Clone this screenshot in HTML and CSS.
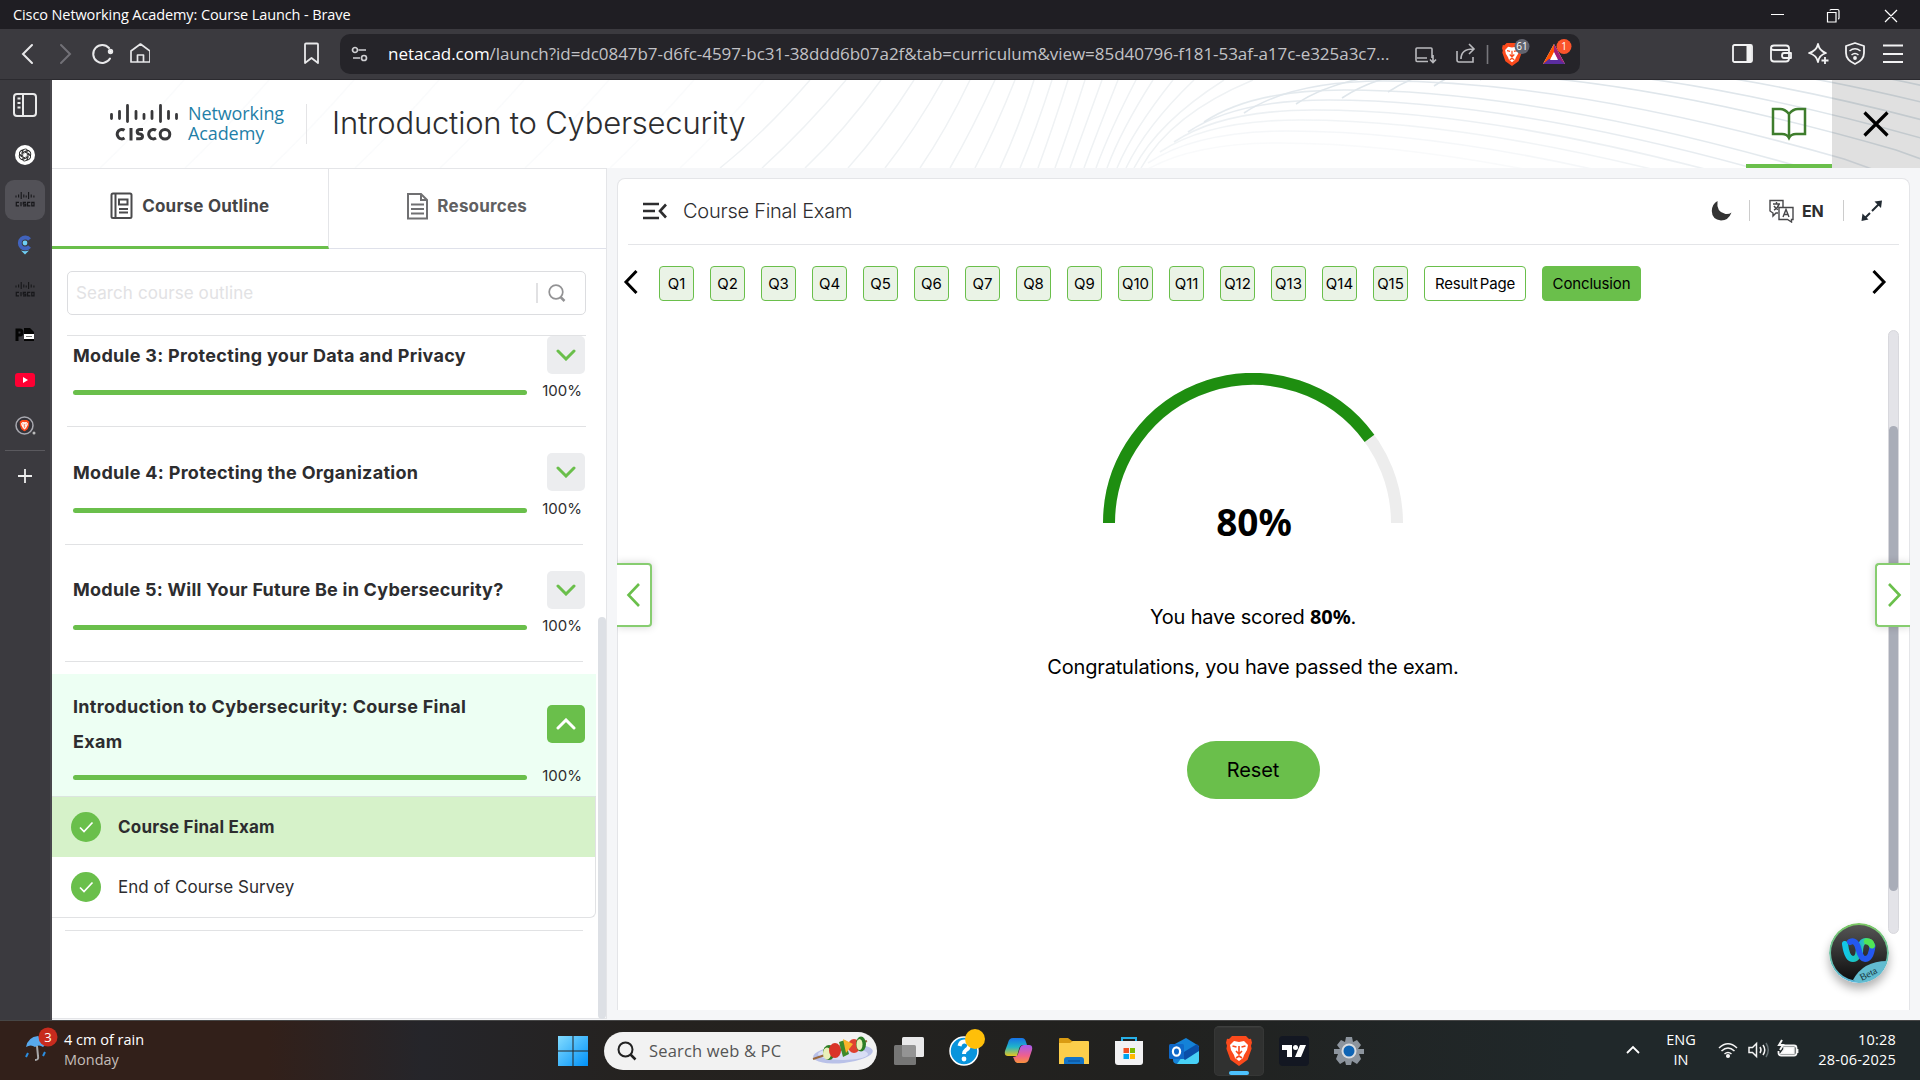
FILE: index.html
```html
<!DOCTYPE html>
<html lang="en">
<head>
<meta charset="utf-8">
<title>Cisco Networking Academy: Course Launch</title>
<link rel="stylesheet" href="styles.css">
</head>
<body>
<svg class="defs" width="0" height="0">
  <defs>
    <symbol id="cisco" viewBox="0 0 20 16">
      <path d="M1 3.5v2M3.6 2.5v3M6.2 0v7M8.8 2.5v3M11.2 3.5v2M13.6 0v7M16.2 2.5v3M18.9 3.5v2" stroke="#17171a" stroke-width="1.1" fill="none"/>
      <path d="M4 10.4H1.300v3.400H4M6 10v4.200M11 10.400H8.300v1.800h2.500v1.700H8M15.300 10.400h-2.700v3.400h2.700M16.800 10.400h2.200v3.400h-2.200z" stroke="#17171a" stroke-width="1.2" fill="none"/>
    </symbol>
    <symbol id="lion" viewBox="0 0 26 30">
      <path d="M6 0h14l3 3 2-.3 1 4-1 3 .6 3-4 11L13 30 4.400 23.700.4 12.700 1 9.700 0 6.700l1-4 2 .3z" fill="#fb4a1c"/>
      <path d="M8 5l5 1 5-1 4 4-1 5-3 5-1 3-4 3-4-3-1-3-3-5-1-5z" fill="#fff"/>
      <path d="M6.500 10l4 1M19.500 10l-4 1M13 10v7M10 15l3 3 3-3M10 22l3-2 3 2" stroke="#fb4a1c" stroke-width="1.600" fill="none"/>
    </symbol>
    <symbol id="down" viewBox="0 0 20 12"><path d="M2 2l8 8 8-8" fill="none" stroke="#6abf4b" stroke-width="3" stroke-linecap="round"/></symbol>
    <symbol id="check" viewBox="0 0 30 30"><circle cx="15" cy="15" r="15" fill="#6abf4b"/><path d="M9 15.500l4 4L21.500 10.500" fill="none" stroke="#fff" stroke-width="1.700"/></symbol>
  </defs>
</svg>

<div class="titlebar">
  <span class="window-title">Cisco Networking Academy: Course Launch - Brave</span>
  <svg class="window-buttons" width="130" height="28" viewBox="0 0 130 28"><g fill="none" stroke="#fff" stroke-width="1.200"><path d="M1 13.500h13M57.500 11.500h8.500v9.500h-8.500zM60 9.500q0-1 1-1h6.500q1.500 0 1.500 1.500v7q0 1-1 1M115 9l12 12M127 9l-12 12"/></g></svg>
</div>

<div class="toolbar">
  <svg class="nav-icons" width="150" height="50" viewBox="0 0 150 50"><g fill="none" stroke="#e8e8ea" stroke-width="2" stroke-linecap="round"><path d="M32 16l-9 9 9 9"/><path d="M61 16l9 9-9 9" stroke="#727177"/><path d="M110 29.500a9 9 0 1 1-1-10.500"/><circle cx="110.500" cy="22.500" r="1.700" fill="#fff"/><path d="M131 22l9.500-7 9.500 7v11h-19zM137.500 33v-7h6v7" stroke-linejoin="round" stroke-width="1.700"/></g></svg>
  <svg class="bookmark" width="18" height="24" viewBox="0 0 18 24"><path d="M2 2.500q0-1 1-1h11q1 0 1 1V21l-6.500-5L2 21z" fill="none" stroke="#e8e8ea" stroke-width="1.800" stroke-linejoin="round"/></svg>
  <div class="address">
    <svg width="18" height="16" viewBox="0 0 18 16"><g fill="none" stroke="#d0d0d3" stroke-width="1.700"><circle cx="4" cy="4" r="2.500"/><path d="M7.500 4H15M2 12h7"/><circle cx="13" cy="12" r="2.500"/></g></svg>
    <span class="url"><b>netacad.com</b>/launch?id=dc0847b7-d6fc-4597-bc31-38ddd6b07a2f&amp;tab=curriculum&amp;view=85d40796-f181-53af-a17c-e325a3c7...</span>
    <svg class="address-icons" width="170" height="40" viewBox="0 0 170 40"><g fill="none" stroke="#b9b9bd" stroke-width="1.600"><path d="M19 24V15q0-1-1-1H4q-1 0-1 1v11q0 1.500 1 1.500h11M4 24h10M20 21v7M17 25.500l3 3 3-3"/><path d="M44 17v9q0 2 2 2h14v-5M48 25q0-10 12-10M56 10l5 5-5 5"/><path d="M74.500 11v19" stroke="#77777c"/></g>
      <use href="#lion" x="89" y="9" width="20" height="23"/><path d="M141 10l11 20h-22z" fill="#fff"/><path d="M141 10v9l-6 11h-5z" fill="#ff5200"/><path d="M141 10v9l6 11h5z" fill="#a11f77"/><path d="M130 30l6-5h10l6 5z" fill="#5b2d9f"/><path d="M141 18l4 8h-8z" fill="#fff"/><circle cx="109" cy="12.500" r="7.500" fill="#62646f"/><circle cx="151" cy="12.500" r="7.500" fill="#fb542b"/><text x="109" y="16" class="tiny">61</text><text x="151" y="16" class="tiny">1</text></svg>
  </div>
  <svg class="right-icons" width="180" height="34" viewBox="0 0 180 34"><g fill="none" stroke="#f2f2f3" stroke-width="1.800" stroke-linejoin="round"><rect x="3" y="8" width="19" height="17" rx="1.500"/><path d="M19 8v17" stroke-width="5"/><path d="M41 11q0-2.500 3-2.500h12q3 0 3 3v10q0 3-3 3H44q-3 0-3-3zM41 11q0 2 3 2h15M61 16h-7q-2 0-2 2.500t2 2.500h7z"/><path d="M88 7q1.500 7 8 9-7 2-8 9-1.500-7-9-9 7.500-2 9-9z"/><path d="M95 20v7M91.500 23.500h7"/><path d="M125 6l9 3v7q0 7-9 11-9-4-9-11V9z"/><path d="M119.500 14q5.500-4.500 11 0M121.500 18q3.500-3 7 0" stroke-width="1.500"/><circle cx="125" cy="21" r="1"/><path d="M153 8.500h20M153 17h20M153 25h20" stroke-width="2"/></g></svg>
</div>

<div class="workspace">
  <nav class="side-tabs">
    <div class="side-tab panel"><svg width="26" height="26" viewBox="0 0 26 26"><g fill="none" stroke="#e9e9ea" stroke-width="2"><rect x="2" y="2" width="22" height="22" rx="3"/><path d="M11 2v22M5.500 6.500h3M5.500 11h3M5.500 15.500h3"/></g></svg></div>
    <div class="side-tab"><svg width="20" height="20" viewBox="0 0 20 20"><circle cx="10" cy="10" r="10" fill="#fff"/><g fill="none" stroke="#222" stroke-width=".9"><path id="petal" d="M7 12V7.500q0-3.500 3.300-3.500 2 0 3 1.700L9.500 8"/><use href="#petal" transform="rotate(60 10 10)"/><use href="#petal" transform="rotate(120 10 10)"/><use href="#petal" transform="rotate(180 10 10)"/><use href="#petal" transform="rotate(240 10 10)"/><use href="#petal" transform="rotate(300 10 10)"/></g></svg></div>
    <div class="side-tab active"><svg width="20" height="16"><use href="#cisco"/></svg></div>
    <div class="side-tab"><svg width="16" height="20" viewBox="0 0 16 20"><path d="M12.500 4.500A5.500 5.500 0 1 0 12.500 11.500" fill="none" stroke="#4163bd" stroke-width="3.800"/><circle cx="8" cy="8" r="2.400" fill="#6fd0f6"/><path d="M4 15.500q4 1.500 8 0l-4 4z" fill="#6fd0f6"/></svg></div>
    <div class="side-tab"><svg width="20" height="16"><use href="#cisco"/></svg></div>
    <div class="side-tab"><svg width="20" height="14" viewBox="0 0 20 14"><path d="M2 13V2h3q2 0 2 2.500T5 7H2" fill="none" stroke="#050505" stroke-width="3"/><path d="M9 0h6l4 4v9H9z" fill="#050505"/><path d="M9 6h10v5H9z" fill="#fff"/><path d="M11 8.500h6" stroke="#777"/></svg></div>
    <div class="side-tab"><svg width="20" height="14" viewBox="0 0 20 14"><rect width="20" height="14" rx="3" fill="#ff0033"/><path d="M8 4l5 3-5 3z" fill="#fff"/></svg></div>
    <div class="side-tab"><svg width="21" height="19" viewBox="0 0 21 19"><circle cx="9.500" cy="9.500" r="8.500" fill="#34333a" stroke="#a9a9b0" stroke-width="1.500"/><use href="#lion" x="4.500" y="4" width="10" height="11.500"/><circle cx="19" cy="17" r="1.500" fill="#bbb"/></svg></div>
    <div class="side-line"></div>
    <div class="side-tab"><svg width="14" height="14" viewBox="0 0 14 14"><path d="M7 0v14M0 7h14" stroke="#eee" stroke-width="1.800"/></svg></div>
  </nav>

  <div class="page">
    <header class="masthead">
      <svg class="waves" width="1868" height="88" viewBox="52 80 1868 88">
        <defs><path id="crest" d="M1204 122C1240 98 1290 90 1344 90C1470 90 1620 115 1804 168L2200 310"/></defs>
        <g fill="none" stroke="#eff2f4" stroke-width="1.500">
          <g opacity=".3"><path d="M100 168q40-38 84-88M185 168q40-38 84-88M270 168q40-38 84-88M355 168q40-38 84-88M440 168q40-38 84-88M525 168q40-38 84-88M610 168q40-38 84-88M680 168q40-38 84-88"/></g>
          <path d="M720 168q45-36 90-88M762 168q42-38 84-88M805 168q40-38 76-88M848 168q34-38 66-88M885 168q30-38 58-88M920 168q26-38 50-88M950 168q22-38 45-88M975 168q20-38 40-88M1000 168q18-38 34-88M1020 168q16-38 32-88M1038 168q14-38 30-88M1055 168q14-38 30-88M1070 168q14-38 32-88M1084 168q14-38 34-88M1096 168q14-38 40-88M1107 168q14-38 46-88M1117 168q16-38 56-88M1126 168q20-42 68-88M1134 168q24-46 90-88M1141 168q30-54 112-88"/>
        </g>
        <g fill="none" stroke="#dfe6eb" stroke-width="1.600">
          <use href="#crest" x="368" y="-56"/><use href="#crest" x="322" y="-48"/><use href="#crest" x="276" y="-42"/><use href="#crest" x="230" y="-36"/><use href="#crest" x="184" y="-30"/><use href="#crest" x="138" y="-24"/><use href="#crest" x="92" y="-18"/>
          <use href="#crest" x="40" y="-9" opacity=".9"/><use href="#crest" opacity=".85"/><use href="#crest" x="-16" y="10" opacity=".75"/><use href="#crest" x="-30" y="20" opacity=".6"/><use href="#crest" x="-44" y="30" opacity=".45"/><use href="#crest" x="-56" y="41" opacity=".3"/><use href="#crest" x="-66" y="53" opacity=".2"/>
        </g>
      </svg>
      <div class="brand">
        <svg width="70" height="40" viewBox="0 0 70 40"><path d="M2.500 10.500v4M10.500 7.500v7M18.500 1.500v16M27 7.500v7M35 10.500v4M43 7.500v7M51.500 1.500v16M59.500 7.500v7M67.500 10.500v4" stroke="#38383a" stroke-width="2.800" stroke-linecap="round"/><g fill="none" stroke="#38383a" stroke-width="3"><path d="M15.500 26.300a4.700 4.700 0 1 0 0 7.800M22 24v12.500M34 25.600h-3q-2.800 0-2.800 2.200t2.500 2.300q2.800.2 2.800 2.400t-2.800 2.300h-3.500M47 26.300a4.700 4.700 0 1 0 0 7.800"/><circle cx="56" cy="30.200" r="4.800"/></g></svg>
        <div class="brand-name">Networking<br>Academy</div>
      </div>
      <h1>Introduction to Cybersecurity</h1>
      <div class="book"><svg width="36" height="34" viewBox="0 0 36 34"><path d="M18 7Q14 2 9 2H2v25h9q5 0 7 4 2-4 7-4h9V2h-7q-5 0-9 5v24" fill="none" stroke="#3e7d2c" stroke-width="2.500"/></svg></div>
      <div class="close"><svg width="26" height="26" viewBox="0 0 26 26"><path d="M1.500 1.500l23 23M24.500 1.500l-23 23" stroke="#000" stroke-width="3.200"/></svg></div>
    </header>

    <div class="columns">
      <aside class="outline">
        <div class="outline-tabs">
          <div class="outline-tab current"><svg width="23" height="28" viewBox="0 0 23 28"><g fill="none" stroke="#4a4a4c" stroke-width="2"><rect x="1.500" y="1.500" width="20" height="24.500" rx="1.500"/><path d="M5.500 1.500v24.500M9 7.500h8.500v5H9zM9 17h9M9 20.500h9"/></g></svg><span>Course Outline</span></div>
          <div class="outline-tab"><svg width="21" height="27" viewBox="0 0 21 27"><path d="M1 1h13l6 6v18.500H1zM14 1v6h6M4 11.500h13M4 16h13M4 20.500h13" fill="none" stroke="#707072" stroke-width="2"/></svg><span>Resources</span></div>
        </div>
        <div class="search"><span>Search course outline</span><i></i><svg width="18" height="18" viewBox="0 0 18 18"><circle cx="8" cy="8" r="6.800" fill="none" stroke="#929294" stroke-width="1.700"/><path d="M12.500 13l4 4" stroke="#929294" stroke-width="2.500"/></svg></div>
        <div class="outline-body">
          <div class="modules">
            <section class="module first"><div class="module-head"><h2>Module 3: Protecting your Data and Privacy</h2><button><svg width="20" height="12"><use href="#down"/></svg></button></div><div class="progress"><i></i><span>100%</span></div></section>
            <section class="module"><div class="module-head"><h2>Module 4: Protecting the Organization</h2><button><svg width="20" height="12"><use href="#down"/></svg></button></div><div class="progress"><i></i><span>100%</span></div></section>
            <section class="module"><div class="module-head"><h2 class="tight">Module 5: Will Your Future Be in Cybersecurity?</h2><button><svg width="20" height="12"><use href="#down"/></svg></button></div><div class="progress"><i></i><span>100%</span></div></section>
            <section class="module-open"><div class="module-head"><h2>Introduction to Cybersecurity: Course Final Exam</h2><button><svg width="20" height="12" viewBox="0 0 20 12"><path d="M2 10l8-8 8 8" fill="none" stroke="#fff" stroke-width="3" stroke-linecap="round"/></svg></button></div><div class="progress"><i></i><span>100%</span></div></section>
            <div class="lessons">
              <div class="lesson selected"><svg width="30" height="30"><use href="#check"/></svg><span>Course Final Exam</span></div>
              <div class="lesson"><svg width="30" height="30"><use href="#check"/></svg><span>End of Course Survey</span></div>
            </div>
            <div class="end-line"></div>
          </div>
          <div class="outline-scroll"></div>
        </div>
      </aside>

      <main class="content">
        <div class="content-head">
          <svg width="25" height="18" viewBox="0 0 25 18"><path d="M0 2h16M0 9h12M0 16h16M23 2.500L17 9l6 6.500" fill="none" stroke="#2d2d2f" stroke-width="2.600"/></svg>
          <span class="content-title">Course Final Exam</span>
          <svg width="21" height="21" viewBox="0 0 21 21"><path d="M6.500 1Q5 12 14.500 14q3.500.5 6-1.500-3 8-10.500 8Q1 19.500.8 11 1 4 6.500 1z" fill="#333"/></svg>
          <i class="rule r1"></i>
          <svg width="25" height="24" viewBox="0 0 25 24"><g fill="none" stroke="#47474a" stroke-width="1.400"><path d="M9 14H7l-3 3v-3l-3-2V1.500h13V8M10 8.500h14v12h-1.500V23l-4-2.500H10zM4 5h7M7.500 3v2M5 11q4-2 5-6M5 7q2 3 4 3.500"/><path d="M14 18l3-7.500 3 7.500M15 15.500h4"/></g></svg>
          <b class="lang">EN</b>
          <i class="rule r2"></i>
          <svg width="22" height="22" viewBox="0 0 22 22"><path d="M13.500 1.500L21 0.500l-1 7.500zM0.500 21l1-7.500 6 6z" fill="#222b33"/><path d="M4 18l5-5M11 11l7-7" stroke="#222b33" stroke-width="2"/></svg>
        </div>
        <div class="questions">
          <svg class="prev" width="16" height="26" viewBox="0 0 16 26"><path d="M13.500 2L3 13l10.500 11" fill="none" stroke="#000" stroke-width="3"/></svg>
          <span class="q">Q1</span><span class="q">Q2</span><span class="q">Q3</span><span class="q">Q4</span><span class="q">Q5</span><span class="q">Q6</span><span class="q">Q7</span><span class="q">Q8</span><span class="q">Q9</span><span class="q">Q10</span><span class="q">Q11</span><span class="q">Q12</span><span class="q">Q13</span><span class="q">Q14</span><span class="q">Q15</span><span class="q result">Result Page</span><span class="q conclusion">Conclusion</span>
          <svg class="next" width="16" height="26" viewBox="0 0 16 26"><path d="M2.500 2L13 13 2.500 24" fill="none" stroke="#000" stroke-width="3"/></svg>
        </div>
        <div class="score">
          <div class="gauge"><svg width="300" height="150" viewBox="0 0 300 150"><path d="M6 150A144 144 0 0 1 294 150" fill="none" stroke="#ededed" stroke-width="12"/><path d="M6 150A144 144 0 0 1 266.500 65.360" fill="none" stroke="#1e8e10" stroke-width="12"/></svg><strong>80%</strong></div>
          <p class="scored">You have scored <b>80%</b>.</p>
          <p class="passed">Congratulations, you have passed the exam.</p>
          <button class="reset">Reset</button>
        </div>
        <div class="content-scroll"><i></i></div>
        <div class="pager left"><svg width="15" height="26" viewBox="0 0 15 26"><path d="M13 2L2.500 13 13 24" fill="none" stroke="#6abf4b" stroke-width="2.600"/></svg></div>
        <div class="pager right"><svg width="15" height="26" viewBox="0 0 15 26"><path d="M2 2l10.500 11L2 24" fill="none" stroke="#6abf4b" stroke-width="2.600"/></svg></div>
        <svg class="assistant" width="60" height="60" viewBox="0 0 60 60">
          <defs><linearGradient id="ring" x2="0" y2="1"><stop stop-color="#7bc862"/><stop offset="1" stop-color="#5bb8de"/></linearGradient><linearGradient id="face" x2="0" y2="1"><stop stop-color="#555"/><stop offset="1" stop-color="#0d0d0d"/></linearGradient><linearGradient id="w1"><stop stop-color="#12c8e8"/><stop offset="1" stop-color="#1fc3b0"/></linearGradient><linearGradient id="w2"><stop stop-color="#1fb5d8"/><stop offset="1" stop-color="#55ee55"/></linearGradient></defs>
          <circle cx="30" cy="30" r="30" fill="url(#ring)"/><circle cx="30" cy="30" r="28" fill="url(#face)"/>
          <path d="M24 57Q34 38 58 38 53 59 30 60z" fill="#62bcd0"/>
          <g fill="none" stroke-width="6" stroke-linecap="round"><path d="M31 30q0-12 6-12 5 0 6 5" stroke="url(#w2)"/><path d="M16 21q2 15 8 15 6 0 6-13" stroke="url(#w1)"/><path d="M21 19q6-3 8.500 7t6.500 10q6 0 7.500-13" stroke="#2458f0"/><path d="M38 18.500q4 0 5 4" stroke="#50e656"/></g>
          <text x="40" y="54" class="beta" transform="rotate(-27 40 52)">Beta</text>
        </svg>
      </main>
    </div>
  </div>
</div>

<footer class="taskbar">
  <div class="weather"><svg width="44" height="44" viewBox="0 0 44 44"><path d="M6 21q2-10 12-11l12 9q-5-1-7 2-4-3-8 0-4-3-9 0z" fill="#58a9ed"/><path d="M17 20l1 10q1 4-3 4" fill="none" stroke="#a8a8aa" stroke-width="2"/><path d="M8 27l-2 4M25 26l-2 4" stroke="#2b8de0" stroke-width="2"/><circle cx="28" cy="11" r="9.500" fill="#c72b1e"/><text x="28" y="16" class="badge">3</text></svg><div>4 cm of rain<br><span>Monday</span></div></div>
  <div class="apps">
    <div class="app"><svg width="30" height="30" viewBox="0 0 30 30"><defs><linearGradient id="win" x2="1" y2="1"><stop stop-color="#83dcff"/><stop offset="1" stop-color="#0091f8"/></linearGradient></defs><path d="M0 0h14.500v14.500H0zM15.500 0H30v14.500H15.500zM0 15.500h14.500V30H0zM15.500 15.500H30V30H15.500z" fill="url(#win)"/></svg></div>
    <div class="task-search"><svg width="20" height="20" viewBox="0 0 20 20"><circle cx="8.500" cy="8.500" r="7" fill="none" stroke="#222" stroke-width="2"/><path d="M13.500 13.500l5 5" stroke="#222" stroke-width="2.500"/></svg><span>Search web &amp; PC</span>
      <svg width="62" height="32" viewBox="0 0 62 32"><ellipse cx="31" cy="19" rx="30" ry="9" fill="#b9c1e8" transform="rotate(-6 31 19)"/><ellipse cx="31" cy="19" rx="25" ry="6" fill="#d9def5"/><path d="M1 24L55 6" stroke="#9a683c" stroke-width="2"/><ellipse cx="17" cy="17.500" rx="6" ry="7.500" fill="#2c7d25"/><ellipse cx="15" cy="18.500" rx="4" ry="6" fill="#e9efb9"/><ellipse cx="23" cy="15.500" rx="6" ry="7.500" fill="#d93528"/><path d="M27 7l6-2 4 14-6 3z" fill="#3c8a2b"/><ellipse cx="42" cy="11" rx="6" ry="7" fill="#df4030"/><path d="M31 4l10 5-7 9z" fill="#f9b32b"/><ellipse cx="49" cy="9" rx="5" ry="7.500" fill="#2c7d25"/><ellipse cx="47.500" cy="9.500" rx="3" ry="5.500" fill="#e9efb9"/></svg></div>
    <div class="app"><svg width="30" height="28" viewBox="0 0 30 28"><rect x="8" width="22" height="20" rx="1.500" fill="#e9e9ea"/><rect y="8" width="22" height="20" rx="1.500" fill="#858585" opacity=".85"/></svg></div>
    <div class="app help"><svg width="36" height="38" viewBox="0 0 36 38"><circle cx="15" cy="22" r="14" fill="#0994dc" stroke="#fff" stroke-width="1.500"/><path d="M10.500 17q1-5 5.500-4.500 5 1 4 5-.5 2-3 3.500-2 1.500-2 4" fill="none" stroke="#fff" stroke-width="4"/><circle cx="15" cy="30" r="2.400" fill="#fff"/><circle cx="26" cy="10" r="10" fill="#ffbf09"/></svg></div>
    <div class="app"><svg width="30" height="28" viewBox="0 0 30 28"><defs><linearGradient id="c1" x2="0" y2="1"><stop stop-color="#1672e8"/><stop offset=".5" stop-color="#20b5c9"/><stop offset="1" stop-color="#e9c51c"/></linearGradient><linearGradient id="c2" x2="0" y2="1"><stop stop-color="#a45bf0"/><stop offset=".6" stop-color="#f0608c"/><stop offset="1" stop-color="#f8923c"/></linearGradient></defs><path d="M9 1h9q3 0 4 4l1 3h-4q-3 0-4 4l-2 7H4Q0 19 1 14L4 6q1-5 5-5z" fill="url(#c1)"/><path d="M20 8h5q4 0 3 5l-3 9q-1 4-5 4h-6q-3 0-4-4l-1-2q4 0 5-3l2-6q1-3 4-3z" fill="url(#c2)"/></svg></div>
    <div class="app"><svg width="30" height="28" viewBox="0 0 30 28"><path d="M0 2q0-1 1-1h8l4 3h9v10H0z" fill="#d99b12"/><path d="M0 6h11l3-2h15q1 0 1 1v22H0z" fill="#fcce4b"/><path d="M5 27v-4q0-3 3-3h14q3 0 3 3v4z" fill="#1374c9"/><path d="M9 24h12" stroke="#0a4b91"/></svg></div>
    <div class="app"><svg width="30" height="30" viewBox="0 0 30 30"><path d="M8 6V2h14v4" fill="none" stroke="#27b0e8" stroke-width="2"/><path d="M1 5h28v21q0 3-3 3H4q-3 0-3-3z" fill="#f2f2f3"/><path d="M9.500 12H15v5H9.500z" fill="#f25022"/><path d="M16 12h5v5h-5z" fill="#7fba00"/><path d="M9.500 18H15v5H9.500z" fill="#00a4ef"/><path d="M16 18h5v5h-5z" fill="#ffb900"/></svg></div>
    <div class="app"><svg width="30" height="28" viewBox="0 0 30 28"><path d="M4 8L17 1l13 8v14q0 4-4 4H9q-5 0-5-4z" fill="#1482d8"/><path d="M13 20L30 10v13q0 4-4 4H8z" fill="#48d1f6"/><path d="M10 18L28 7l2 3v4l-14 9z" fill="#0a4fa8"/><rect y="7" width="15" height="15" rx="1.500" fill="#0f68c8"/><ellipse cx="7.500" cy="14.500" rx="3.600" ry="4.200" fill="none" stroke="#fff" stroke-width="2.200"/></svg></div>
    <div class="app open"><svg width="26" height="30"><use href="#lion"/></svg></div>
    <div class="app"><svg width="30" height="30" viewBox="0 0 30 30"><rect width="30" height="30" rx="4" fill="#131722"/><path d="M3 9h10v12H8v-7H3zM21 9h6l-5 12h-6z" fill="#fff"/><circle cx="16.500" cy="11.500" r="2.500" fill="#fff"/></svg></div>
    <div class="app"><svg width="30" height="30" viewBox="0 0 30 30"><path d="M12 1h6l1 5 4-2 4 5-3 4h6v5h-5l2 5-4 5-5-3-1 4h-5l-1-4-5 3-4-5 2-5H0v-5h6L3 9l4-5 4 2z" fill="#8c949d"/><circle cx="15" cy="15" r="7.500" fill="#d9dde1"/><circle cx="15" cy="15" r="5.500" fill="#0e64b4"/></svg></div>
  </div>
  <div class="tray">
    <svg width="16" height="10" viewBox="0 0 16 10"><path d="M2 8l6-6 6 6" fill="none" stroke="#fff" stroke-width="1.800"/></svg>
    <div class="locale">ENG<br>IN</div>
    <svg class="status" width="84" height="24" viewBox="0 0 84 24"><g fill="none" stroke="#f4f4f4" stroke-width="1.500"><path d="M2 10q9-8.500 18 0M4.500 13q6.500-6 13 0M7.500 16q3.500-3 7 0"/><circle cx="11" cy="18" r="1.300" fill="#fff"/><path d="M32 9.500h3.500l4-4v13l-4-4H32zM43 9q2 3 0 6M46 7q3.500 5 0 10"/><path d="M49 5q4.500 7 0 14" stroke="#657073"/><path d="M66 7.500h11q2.500 0 2.500 2.500v5q0 2.500-2.500 2.500H64q-2.500 0-2.500-3V13M80.500 11v4" stroke-width="1.800"/><path d="M67 9.500h10v6H64l3-4z" fill="#fff"/><path d="M65 2l-3 5h4l-3 5" stroke-width="2"/></g></svg>
    <div class="clock">10:28<br>28-06-2025</div>
  </div>
</footer>
</body>
</html>
```
FILE: styles.css
```css
* { box-sizing: border-box; }
body { margin: 0; width: 1920px; height: 1080px; overflow: hidden; display: flex; flex-direction: column; font-family: Inter, "Liberation Sans", sans-serif; color: #2d2d2f; background: #f5f6f8; }
svg { display: block; flex: none; }
button { border: 0; padding: 0; font: inherit; }
h1, h2, p { margin: 0; }
.defs { position: absolute; }

.titlebar { height: 29px; background: #1f1e23; display: flex; align-items: center; justify-content: space-between; padding: 0 20px 0 13px; color: #fff; }
.window-title { font: 14.5px/20px "Open Sans", sans-serif; letter-spacing: -0.1px; }

.toolbar { height: 51px; background: #3b3a3f; border-bottom: 1px solid #2b2a2f; display: flex; align-items: center; }
.bookmark { margin-left: 153px; }
.address { width: 1240px; height: 40px; margin: -1px 0 0 19px; padding-left: 11px; border-radius: 10px; background: #252429; display: flex; align-items: center; }
.url { width: 1006px; flex: none; margin-left: 19px; font: 17px/24px "Open Sans", sans-serif; letter-spacing: -.04px; color: #c2c2c6; white-space: nowrap; }
.url b { font-weight: 400; color: #fff; }
.address-icons { margin-left: 19px; margin-right: -10px; }
.tiny { font: 10px "Open Sans", sans-serif; fill: #fff; text-anchor: middle; }
.right-icons { margin-left: 150px; }

.workspace { height: 940px; display: flex; }
.side-tabs { width: 52px; background: #3b3a3f; border-right: 2px solid #48474c; padding: 5px; display: flex; flex-direction: column; gap: 5px; }
.side-tab { width: 40px; height: 40px; border-radius: 9px; display: flex; align-items: center; justify-content: center; flex: none; }
.panel { margin-bottom: 5px; }
.active { background: #525157; }
.side-line { height: 1px; background: #5a595e; flex: none; }

.page { width: 1868px; display: flex; flex-direction: column; }
.masthead { height: 88px; background: #fff; display: flex; align-items: center; position: relative; }
.waves { position: absolute; left: 0; top: 0; }
.brand { position: relative; width: 255px; height: 40px; padding-left: 57px; display: flex; gap: 9px; border-right: 1px solid #e4e4e6; }
.brand-name { font: 18px/20px "Open Sans", sans-serif; letter-spacing: -.1px; color: #1f7fa8; margin-top: -1px; }
h1 { position: relative; font-size: 31px; font-weight: 300; margin: -3px 0 0 25px; letter-spacing: -.22px; width: 1359px; white-space: nowrap; }
.book { position: relative; width: 86px; margin-left: auto; height: 88px; padding-top: 4px; border-bottom: 4px solid #6abf4b; display: flex; align-items: center; justify-content: center; }
.close { position: relative; width: 88px; height: 88px; background: rgba(0,0,0,.12); display: flex; align-items: center; justify-content: center; }

.columns { display: flex; height: 852px; background: #f5f6f8; }
.outline { width: 555px; height: 851px; background: #fff; border: 1px solid #e4e5e8; border-left: 0; }
.outline-tabs { display: flex; height: 80px; }
.outline-tab { width: 278px; border-bottom: 1px solid #dfe1ea; display: flex; align-items: center; justify-content: center; gap: 9px; padding-bottom: 5px; font-size: 17px; font-weight: 700; letter-spacing: .22px; color: #606062; }
.outline-tab.current { width: 277px; border-bottom: 3px solid #6abf4b; border-right: 1px solid #e4e5e8; color: #454547; padding-bottom: 3px; }
.search { width: 519px; height: 44px; margin: 22px 0 0 15px; border: 1px solid #dcdde0; border-radius: 5px; display: flex; align-items: center; padding-left: 8px; color: #e2e2e4; font-size: 17px; letter-spacing: .1px; }
.search span { width: 460px; }
.search i { width: 2px; height: 20px; background: #e1e1e3; margin-right: 10px; }
.outline-body { height: 684px; margin-top: 20px; display: flex; justify-content: space-between; }
.modules { width: 544px; }
.module { height: 117.600px; border-bottom: 1px solid #e1e2e4; margin: 0 13px; padding: 26px 0 0 8px; }
.module.first { height: 92px; padding: 0 0 0 6px; margin: 0 10px 0 15px; border-top: 1px solid #e1e2e4; }
.module-head { display: flex; justify-content: space-between; align-items: center; width: 512px; min-height: 38px; }
h2 { font-size: 18px; font-weight: 700; line-height: 35px; letter-spacing: .3px; white-space: nowrap; }
h2.tight { letter-spacing: .24px; }
.module-head button { width: 38px; height: 38px; border-radius: 5px; background: #ecedef; display: flex; align-items: center; justify-content: center; flex: none; }
.progress { width: 509px; height: 20px; margin-top: 7px; display: flex; align-items: center; justify-content: space-between; font-size: 15px; }
.progress i { width: 454px; height: 5px; border-radius: 3px; background: #6abf4b; margin-top: 4px; }
.first .progress { margin-top: 6px; }
.module-open { height: 123px; background: #edfff3; border-bottom: 1px solid #dce5df; padding: 15px 0 0 21px; margin-top: 12px; }
.module-open h2 { width: 410px; white-space: normal; }
.module-open button { background: #6abf4b; }
.module-open .progress { margin-top: 6px; }
.lessons { height: 121px; border-right: 1px solid #e1e2e4; border-bottom: 1px solid #e1e2e4; border-radius: 0 0 6px 0; }
.lesson { height: 60px; display: flex; align-items: center; gap: 17px; padding-left: 19px; font-size: 17px; letter-spacing: .04px; }
.selected { background: #d6f2c9; font-weight: 700; letter-spacing: .2px; }
.end-line { height: 1px; background: #e1e2e4; margin: 12px 13px 0; }
.outline-scroll { width: 8px; height: 402px; margin-top: 282px; border-radius: 4px; background: #dde0e5; }

.content { position: relative; width: 1293px; height: 832px; margin: 10px 0 0 10px; background: #fff; border: 1px solid #e4e5e8; border-bottom: 0; border-radius: 8px 8px 0 0; }
.content-head { height: 66px; margin: 0 10px 0 10px; padding: 0 0 2px 15px; border-bottom: 1px solid #e4e5e8; display: flex; align-items: center; }
.content-title { margin-left: 15px; width: 1028px; font-size: 20px; font-weight: 300; letter-spacing: -.25px; }
.rule { width: 1px; height: 21px; background: #ccc; }
.r1 { margin: 0 19px 0 17px; }
.r2 { margin: 0 17px 0 18px; }
.lang { margin-left: 8px; width: 23px; font-size: 16px; font-weight: 700; letter-spacing: -.1px; }
.questions { display: flex; align-items: center; height: 36px; margin-top: 20px; padding: 0 22px 0 5px; gap: 16px; }
.prev { margin: -2px 4px 0 0; }
.next { margin: -2px 0 0 auto; }
.q { width: 35px; height: 35px; border: 1px solid #6abf4b; border-radius: 4px; background: #eaf3e6; display: flex; align-items: center; justify-content: center; font-size: 15px; color: #000; white-space: nowrap; flex: none; }
.result { width: 102px; background: #fff; letter-spacing: -.15px; word-spacing: -2px; }
.conclusion { width: 99px; background: #6abf4b; letter-spacing: -.15px; }
.score { width: 600px; margin: 72px 0 0 335px; display: flex; flex-direction: column; align-items: center; color: #000; }
.gauge { height: 170px; display: flex; flex-direction: column; align-items: center; }
.gauge strong { font: 700 37px/44px "Noto Sans", sans-serif; margin: -23px 0 0 2px; }
.score p { font-size: 20px; line-height: 30px; letter-spacing: -.18px; }
.score p b { font-family: "Noto Sans", sans-serif; }
.scored { margin-top: 59px; }
.passed { margin-top: 20px; }
.reset { width: 133px; height: 58px; margin-top: 59px; border-radius: 29px; background: #6abf4b; font-size: 20px; letter-spacing: -.1px; color: #000; }
.content-scroll { position: absolute; right: 10px; top: 151px; width: 11px; height: 604px; border: 1px solid #d8d8dd; border-radius: 6px; background: #e3e3e8; padding-top: 95px; }
.content-scroll i { display: block; width: 9px; height: 465px; border-radius: 5px; background: #a9adb8; }
.pager { position: absolute; top: 384px; width: 35px; height: 64px; border: 2px solid #87cd70; background: #fff; display: flex; align-items: center; box-shadow: 0 0 8px rgba(0,0,0,.18); }
.pager.left { left: -1px; border-left: 0; border-radius: 0 4px 4px 0; padding-left: 9px; clip-path: inset(-10px -10px -10px 0); }
.pager.right { right: -1px; border-right: 0; border-radius: 4px 0 0 4px; padding-left: 10px; clip-path: inset(-10px 0 -10px -10px); }
.assistant { position: absolute; left: 1211px; top: 744px; border-radius: 50%; box-shadow: 0 6px 10px rgba(0,0,0,.3); }
.beta { font: 10px "Liberation Serif", serif; fill: #17343b; text-anchor: middle; }

.taskbar { height: 60px; background: linear-gradient(90deg, #32201a, #32201a 14%, #25252a 22%, #25221f 34%, #21211f 60%, #20282a 82%); border-top: 1px solid #464646; display: flex; color: #fff; font: 14.500px/20px "Open Sans", sans-serif; }
.weather { width: 548px; display: flex; padding: 5px 0 0 20px; }
.weather div { padding-top: 4px; }
.weather span { color: #c4bdb9; }
.badge { font: 13px "Open Sans", sans-serif; fill: #fff; text-anchor: middle; }
.apps { display: flex; gap: 5px; width: 826px; align-items: center; }
.app { width: 50px; height: 50px; display: flex; align-items: center; justify-content: center; border-radius: 5px; flex: none; }
.help { padding: 0 0 6px 5px; }
.open { background: #303130; border-top: 1px solid #3e3f3e; box-shadow: inset 0 0 0 1px #363736; position: relative; }
.open::after { content: ""; position: absolute; bottom: 1px; left: 15px; width: 20px; height: 4px; border-radius: 2px; background: #4cc2ff; }
.task-search { width: 273px; height: 38px; margin: 0 2px 0 1px; border-radius: 19px; background: #f2f2f2; display: flex; align-items: center; padding-left: 13px; color: #555; font-size: 16.500px; letter-spacing: .18px; flex: none; }
.task-search span { width: 163px; margin-left: 12px; white-space: nowrap; }
.tray { display: flex; align-items: center; padding: 0 0 2px 251px; }
.locale { width: 46px; text-align: center; margin-left: 17px; }
.status { margin-left: 13px; }
.clock { width: 95px; text-align: right; white-space: nowrap; letter-spacing: .2px; }
```
